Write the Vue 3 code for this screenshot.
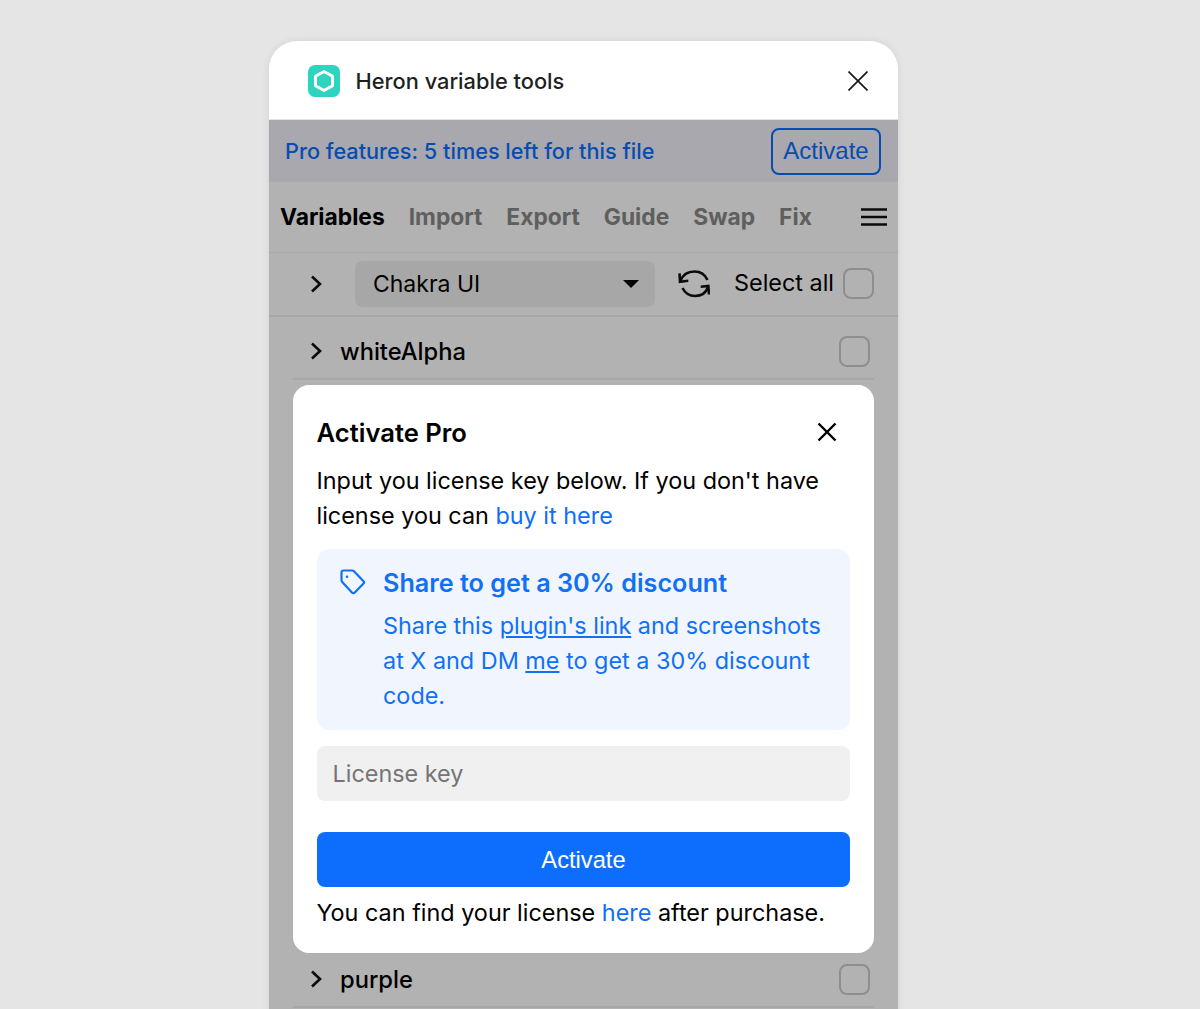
<template>
  <div class="page">
    <div class="window">
      <header class="titlebar">
        <div class="logo">
          <svg viewBox="0 0 32 32" width="32" height="32">
            <rect width="32" height="32" rx="7" fill="#2dd4bf" />
            <path d="M16 6.500l8.500 4.800v9.400L16 25.500l-8.500-4.800v-9.400z" fill="none" stroke="#fff" stroke-width="3" stroke-linejoin="round" />
          </svg>
        </div>
        <span class="app-name">Heron variable tools</span>
        <svg class="close-app" viewBox="0 0 20 20" width="20" height="20">
          <path d="M0.5 0.5l19 19M19.5 0.5l-19 19" stroke="#1a1a1a" stroke-width="1.7" fill="none" />
        </svg>
      </header>

      <div class="body">
        <div class="banner">
          <span>Pro features: 5 times left for this file</span>
          <button class="banner-btn">Activate</button>
        </div>

        <nav class="tabs">
          <span v-for="(tab, i) in tabs" :key="tab" class="tab" :class="{ active: i === 0 }">{{ tab }}</span>
          <svg class="menu" viewBox="0 0 26 18" width="26" height="18">
            <path d="M0 1.500h26M0 9h26M0 16.500h26" stroke="#111" stroke-width="2.400" />
          </svg>
        </nav>

        <div class="toolbar">
          <svg class="chev" viewBox="0 0 12 18" width="12" height="18">
            <path d="M2 1.500L10 9l-8 7.500" fill="none" stroke="#111" stroke-width="2.600" />
          </svg>
          <div class="select">
            <span>Chakra UI</span>
            <i class="caret"></i>
          </div>
          <svg class="sync" viewBox="0 0 32 28" width="32" height="28">
            <path d="M2.500 11C5 4 11 1.500 16.500 1.500C23 1.500 27.500 5.500 29.500 10M30 17C28 23 23 26 17 26C11 26 7 23 4.500 18" fill="none" stroke="#111" stroke-width="2.600" />
            <path d="M1.500 3.300L2 11.700l8.300-1M31 24.500L30.300 16l-7.600.7" fill="none" stroke="#111" stroke-width="2.600" />
          </svg>
          <span class="select-all">Select all</span>
          <span class="check"></span>
        </div>

        <div class="rows">
          <div class="row">
            <svg class="chev-sm" viewBox="0 0 12 18" width="12" height="18">
              <path d="M2 1.500L10 9l-8 7.500" fill="none" stroke="#111" stroke-width="2.600" />
            </svg>
            <span class="row-name">whiteAlpha</span>
            <span class="check"></span>
          </div>
          <!-- rows under the dialog -->
          <div class="rows-covered"></div>
          <div class="row">
            <svg class="chev-sm" viewBox="0 0 12 18" width="12" height="18">
              <path d="M2 1.500L10 9l-8 7.500" fill="none" stroke="#111" stroke-width="2.600" />
            </svg>
            <span class="row-name">purple</span>
            <span class="check"></span>
          </div>
        </div>

        <div class="scrim">
          <div class="modal">
            <div class="modal-head">
              <h2>Activate Pro</h2>
              <svg viewBox="0 0 20 20" width="20" height="20">
                <path d="M1.500 1.500l17 17M18.500 1.500l-17 17" stroke="#000" stroke-width="2.400" fill="none" />
              </svg>
            </div>
            <p class="intro">Input you license key below. If you don't have license you can <a>buy it here</a></p>

            <div class="discount">
              <svg class="tag" viewBox="0 0 26 26" width="26" height="26">
                <path d="M1.500 3.500a2 2 0 0 1 2-2h8.700a2.500 2.500 0 0 1 1.800.7l9.300 9.800a2 2 0 0 1 0 2.800l-8.500 8.800a2 2 0 0 1-2.900 0L2.200 13a2.500 2.500 0 0 1-.7-1.800z" fill="none" stroke="#1270f5" stroke-width="2.200" stroke-linejoin="round" />
                <circle cx="7" cy="7.700" r="1.300" fill="#1270f5" />
              </svg>
              <div>
                <div class="discount-title">Share to get a 30% discount</div>
                <p class="discount-text">Share this <u>plugin's link</u> and screenshots at X and DM <u>me</u> to get a 30% discount code.</p>
              </div>
            </div>

            <div class="license">License key</div>
            <button class="activate">Activate</button>
            <p class="foot">You can find your license <a>here</a> after purchase.</p>
          </div>
        </div>
      </div>
    </div>
  </div>
</template>

<script setup>
const tabs = ['Variables', 'Import', 'Export', 'Guide', 'Swap', 'Fix']
</script>

<style>
html, body {
  margin: 0;
  height: 100%;
  overflow: hidden;
}
</style>

<style scoped>
.page {
  height: 100vh;
  overflow: hidden;
  background: #e5e5e5;
  display: flex;
  padding: 41px 0 0 269px;
  box-sizing: border-box;
  font-family: Inter, "Liberation Sans", sans-serif;
  color: #000;
}

.window {
  width: 628.500px;
  height: 1200px;
  background: #fff;
  border-radius: 28px 28px 0 0;
  overflow: hidden;
  flex: none;
  box-shadow: 0 0 8px rgba(0, 0, 0, 0.08);
}

.titlebar {
  height: 76px;
  display: flex;
  align-items: center;
  padding: 2px 29.500px 0 39px;
  border-bottom: 1px solid #e2e2e2;
}

.logo {
  width: 32px;
  height: 32px;
  margin-right: 16px;
}

.app-name {
  font-size: 21.800px;
  font-weight: 500;
  color: #1f1f1f;
  flex: 1;
  margin-left: -0.5px;
}

.body {
  position: relative;
  height: 1121px;
}

.banner {
  height: 62px;
  background: #f1f1f9;
  display: flex;
  align-items: center;
  justify-content: space-between;
  padding: 0 16.500px 0 16px;
  color: #0d6efd;
  font-size: 21.700px;
  font-weight: 500;
}

.banner-btn {
  width: 110px;
  height: 47px;
  border: 2px solid #0d6efd;
  border-radius: 8px;
  background: none;
  color: #0d6efd;
  font-family: "Liberation Sans", sans-serif;
  font-size: 24px;
  padding: 0;
}

.tabs {
  height: 68px;
  display: flex;
  align-items: center;
  gap: 24px;
  padding: 0 10.500px 2px 11px;
  border-bottom: 1px solid #f0f0f0;
  font-size: 22.800px;
  font-weight: 700;
  color: #888;
}

.tab.active {
  color: #000;
}

.menu {
  margin-left: auto;
  margin-top: 2px;
}

.toolbar {
  height: 62px;
  display: flex;
  align-items: center;
  padding: 0 23.500px 0 41px;
  border-bottom: 2px solid #f0f0f0;
}

.select {
  width: 301px;
  height: 46px;
  margin-left: 33px;
  border-radius: 8px;
  background: #f0f0f0;
  display: flex;
  align-items: center;
  justify-content: space-between;
  padding: 0 16px 0 18px;
  box-sizing: border-box;
  font-size: 23px;
}

.caret {
  width: 0;
  height: 0;
  border-left: 8px solid transparent;
  border-right: 8px solid transparent;
  border-top: 8px solid #000;
}

.sync {
  margin-left: 23px;
  flex: none;
}

.select-all {
  margin-left: 24px;
  margin-right: 9px;
  margin-bottom: 3px;
  font-size: 23.400px;
  white-space: nowrap;
}

.check {
  width: 31px;
  height: 31px;
  box-sizing: border-box;
  border: 2px solid #ccc;
  border-radius: 8px;
  flex: none;
}

.toolbar .check {
  margin-bottom: 2px;
}

.rows {
  padding: 0 23.500px 0 24px;
}

.rows-covered {
  height: 565.200px;
}

.row {
  height: 62.800px;
  display: flex;
  align-items: center;
  border-bottom: 2px solid #f0f0f0;
  box-sizing: border-box;
  padding: 8px 4px 0 17px;
}

.row-name {
  flex: 1;
  margin-left: 18px;
  font-size: 23.700px;
  font-weight: 500;
}

.scrim {
  position: absolute;
  inset: 0;
  background: rgba(0, 0, 0, 0.3);
  padding: 265px 23.500px 0 24px;
  box-sizing: border-box;
}

.modal {
  background: #fff;
  border-radius: 16px;
  padding: 24px;
  height: 568px;
  box-sizing: border-box;
}

.modal-head {
  height: 46px;
  margin-bottom: 8px;
  display: flex;
  align-items: center;
  justify-content: space-between;
  padding-right: 13px;
}

.modal-head h2 {
  margin: 0 0 0 -0.5px;
  font-size: 25.600px;
  font-weight: 600;
}

.intro {
  margin: 0 0 0 -0.5px;
  font-size: 23.400px;
  line-height: 35px;
}

.modal a {
  color: #0d6efd;
}

.discount {
  margin-top: 16px;
  height: 181px;
  box-sizing: border-box;
  background: #f1f6fe;
  border-radius: 12px;
  padding: 16px 16px 0 23px;
  display: flex;
  gap: 17px;
  color: #1270f5;
}

.tag {
  flex: none;
  margin-top: 4px;
}

.discount-title {
  font-size: 25.200px;
  font-weight: 600;
  line-height: 36px;
}

.discount-text {
  margin: 7px 0 0;
  font-size: 23.400px;
  line-height: 35px;
}

.license {
  margin-top: 16px;
  height: 55px;
  background: #f0f0f0;
  border-radius: 8px;
  padding-left: 15.500px;
  display: flex;
  align-items: center;
  font-size: 23.400px;
  color: #757575;
}

.activate {
  display: block;
  width: 100%;
  height: 55px;
  margin-top: 31px;
  padding: 2px 0 0;
  border: none;
  border-radius: 8px;
  background: #0d6efd;
  color: #fff;
  font-family: "Liberation Sans", sans-serif;
  font-size: 23.700px;
}

.foot {
  margin: 8px 0 0 -0.5px;
  font-size: 23.400px;
  line-height: 35px;
}
</style>
